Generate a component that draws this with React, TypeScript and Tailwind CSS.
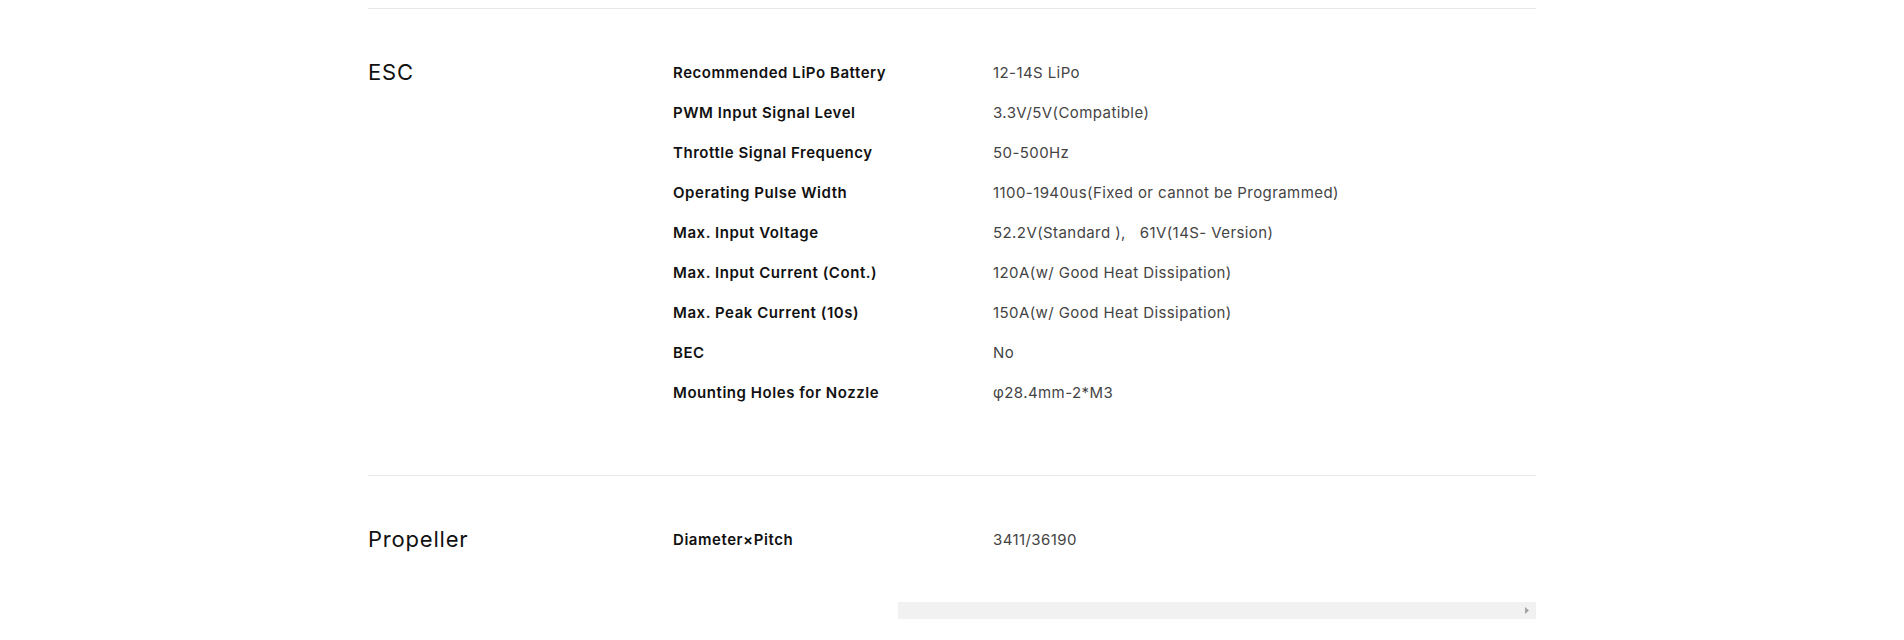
const ESC_SPECS: [string, string][] = [
  ['Recommended LiPo Battery', '12-14S LiPo'],
  ['PWM Input Signal Level', '3.3V/5V(Compatible)'],
  ['Throttle Signal Frequency', '50-500Hz'],
  ['Operating Pulse Width', '1100-1940us(Fixed or cannot be Programmed)'],
  ['Max. Input Voltage', '52.2V(Standard ),   61V(14S- Version)'],
  ['Max. Input Current (Cont.)', '120A(w/ Good Heat Dissipation)'],
  ['Max. Peak Current (10s)', '150A(w/ Good Heat Dissipation)'],
  ['BEC', 'No'],
  ['Mounting Holes for Nozzle', 'φ28.4mm-2*M3'],
];

const PROP_SPECS: [string, string][] = [['Diameter×Pitch', '3411/36190']];

function SpecSection({ title, rows, bottom }: { title: string; rows: [string, string][]; bottom: string }) {
  return (
    <div className={`flex border-t border-[#e8e8e8] pt-[44px] ${bottom}`}>
      <h3 className="w-[305px] shrink-0 text-[22px] leading-[38px] font-normal tracking-[0.8px] text-[#111]">{title}</h3>
      <div className="flex-1">
        {rows.map(([label, value]) => (
          <div key={label} className="flex h-[40px] items-center text-[15px]">
            <div className="w-[320px] shrink-0 font-semibold tracking-[0.55px] text-[#111]">{label}</div>
            <div className="whitespace-pre tracking-[0.42px] text-[#444]">{value}</div>
          </div>
        ))}
      </div>
    </div>
  );
}

export default function App() {
  return (
    <div className="h-[640px] overflow-hidden bg-white font-['Inter',sans-serif]">
      <div className="mx-auto w-[1168px] pt-2">
        <SpecSection title="ESC" rows={ESC_SPECS} bottom="pb-[62px]" />
        <SpecSection title="Propeller" rows={PROP_SPECS} bottom="pb-[42px]" />
        {/* horizontal scrollbar of the table */}
        <div className="ml-[530px] flex h-[17px] items-center justify-end bg-[#f1f1f1] pr-[7px]">
          <svg width="4" height="7" viewBox="0 0 4 7">
            <path d="M0 0 L4 3.5 L0 7 Z" fill="#a3a3a3" />
          </svg>
        </div>
      </div>
    </div>
  );
}
